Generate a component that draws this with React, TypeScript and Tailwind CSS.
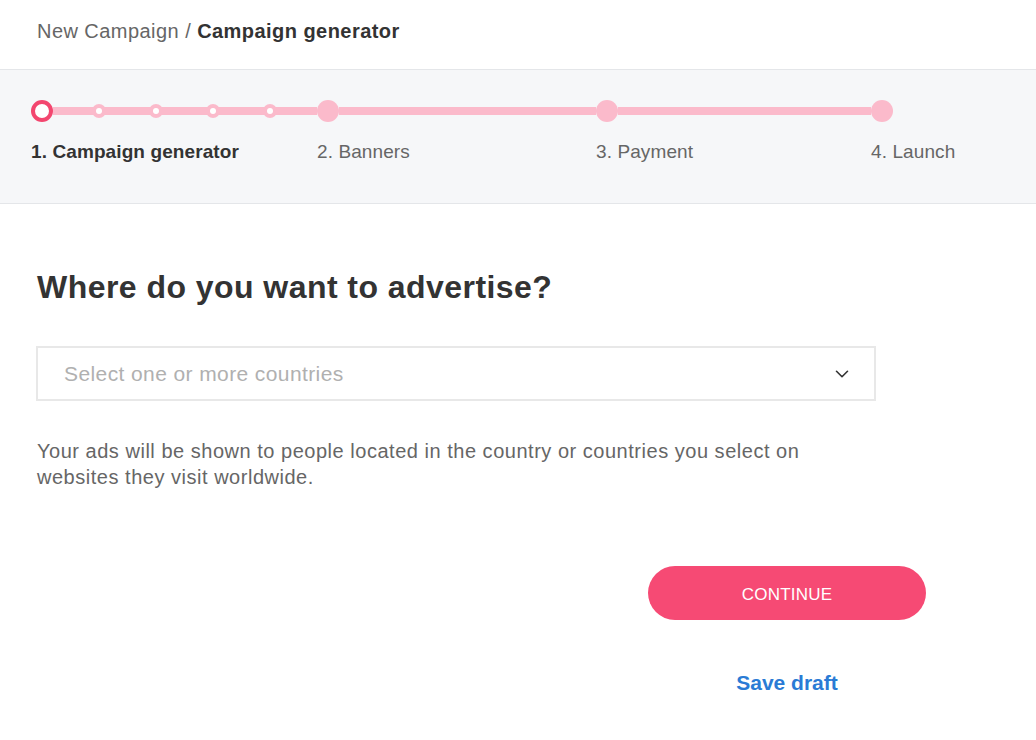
import React from 'react';
import { ChevronDown } from 'lucide-react';

const steps = [
  { label: '1. Campaign generator', active: true, width: 'w-[286px]' },
  { label: '2. Banners', active: false, width: 'w-[279px]' },
  { label: '3. Payment', active: false, width: 'w-[275px]' },
  { label: '4. Launch', active: false, width: 'w-[140px]' },
];

const CampaignGenerator = () => {
  return (
    <div className="min-h-[740px] bg-white text-[#333]" style={{ fontFamily: '"Liberation Sans", Arial, sans-serif' }}>
      <div className="h-[69px] flex items-center pl-[37px] pb-[8px] text-[20px] tracking-[0.45px]">
        <span className="text-[#666]">New Campaign /&nbsp;</span>
        <span className="font-semibold text-[#333]">Campaign generator</span>
      </div>

      <div className="h-[135px] bg-[#f6f7f9] border-y border-[#e4e6e9] pl-[31px] pt-[30px]">
        <div className="flex items-center h-[22px]">
          <div className="w-[22px] h-[22px] rounded-full border-[4px] border-[#f3466f] bg-white shrink-0" />
          <div className="w-[264px] h-[8px] bg-[#fbbacb] flex items-center pl-[39px] gap-[43px]">
            {[0, 1, 2, 3].map((i) => (
              <div key={i} className="w-[14px] h-[14px] rounded-full bg-[#fbbacb] flex items-center justify-center shrink-0">
                <div className="w-[6px] h-[6px] rounded-full bg-white" />
              </div>
            ))}
          </div>
          <div className="w-[22px] h-[22px] rounded-full bg-[#fbbacb] shrink-0" />
          <div className="w-[257px] h-[8px] bg-[#fbbacb]" />
          <div className="w-[22px] h-[22px] rounded-full bg-[#fbbacb] shrink-0" />
          <div className="w-[253px] h-[8px] bg-[#fbbacb]" />
          <div className="w-[22px] h-[22px] rounded-full bg-[#fbbacb] shrink-0" />
        </div>
        <div className="flex mt-[18px]">
          {steps.map((s) => (
            <div key={s.label} className={`${s.width} shrink-0 text-[19px] leading-[24px] tracking-[0.1px] whitespace-nowrap ${s.active ? 'font-semibold text-[#333]' : 'text-[#666]'}`}>
              {s.label}
            </div>
          ))}
        </div>
      </div>

      <div className="pl-[37px] pt-[64px]">
        <h1 className="text-[32px] leading-[38px] font-bold text-[#333] tracking-[0.45px]">Where do you want to advertise?</h1>

        <div className="mt-[40px] w-[840px] h-[55px] border-2 border-[#e8e8e8] flex items-center justify-between pl-[26px] pr-[21px] -ml-[1px]">
          <span className="text-[21px] text-[#b0b0b0] tracking-[0.4px]">Select one or more countries</span>
          <ChevronDown size={22} strokeWidth={1.75} className="text-[#333]" />
        </div>

        <p className="mt-[37px] w-[800px] text-[20px] leading-[26px] text-[#666] tracking-[0.52px]">
          Your ads will be shown to people located in the country or countries you select on websites they visit worldwide.
        </p>

        <div className="flex justify-end w-[889px] mt-[76px]">
          <div className="flex flex-col items-center w-[278px]">
            <button className="w-[278px] h-[54px] rounded-full bg-[#f64a74] text-white text-[17px] tracking-[0.2px] pt-[4px]">
              CONTINUE
            </button>
            <button className="mt-[47px] text-[21px] font-bold text-[#2a7bd5]">Save draft</button>
          </div>
        </div>
      </div>
    </div>
  );
};

export default CampaignGenerator;
